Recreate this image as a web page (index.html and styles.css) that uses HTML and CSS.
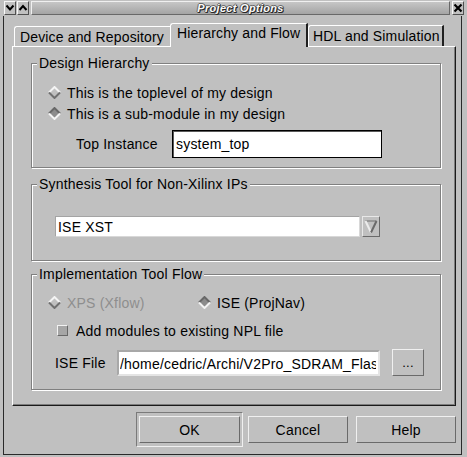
FILE: index.html
```html
<!DOCTYPE html>
<html>
<head>
<meta charset="utf-8">
<title>Project Options</title>
<link rel="stylesheet" href="styles.css">
</head>
<body>
<div class="window">
  <div class="titlebar">
    <div class="wmbtn"><svg width="10" height="8" viewBox="0 0 10 8"><polyline points="1.5,1.5 5,5.5 8.5,1.5" fill="none" stroke="#000" stroke-width="2"/></svg></div>
    <div class="wmbtn"><svg width="10" height="8" viewBox="0 0 10 8"><polyline points="1.5,6 5,2 8.5,6" fill="none" stroke="#000" stroke-width="2"/></svg></div>
    <div class="title">Project Options</div>
    <div class="wmbtn close"><svg width="10" height="10" viewBox="0 0 10 10"><path d="M1.5 1.5 L8.5 8.5 M8.5 1.5 L1.5 8.5" stroke="#000" stroke-width="2.2"/></svg></div>
  </div>
  <div class="client">
    <div class="tabs">
      <div class="tab tab-device">Device and Repository</div>
      <div class="tab tab-active">Hierarchy and Flow</div>
      <div class="tab tab-hdl">HDL and Simulation</div>
    </div>
    <div class="panel">
      <div class="group group-hier">
        <div class="group-title">Design Hierarchy</div>
        <div class="gbody">
          <div class="radio">
            <svg class="diamond" width="13" height="13" viewBox="0 0 13 13"><polyline points="1,6.5 6.5,1 12,6.5" fill="none" stroke="#f4f4f4" stroke-width="2"/><polyline points="1,6.5 6.5,12 12,6.5" fill="none" stroke="#707070" stroke-width="2"/></svg>
            <span>This is the toplevel of my design</span>
          </div>
          <div class="radio">
            <svg class="diamond" width="13" height="13" viewBox="0 0 13 13"><polygon points="6.5,1 12,6.5 6.5,12 1,6.5" fill="#8c8c8c"/><polyline points="1,6.5 6.5,1 12,6.5" fill="none" stroke="#686868" stroke-width="2"/><polyline points="1,6.5 6.5,12 12,6.5" fill="none" stroke="#f4f4f4" stroke-width="2"/></svg>
            <span>This is a sub-module in my design</span>
          </div>
          <div class="field-row top-row">
            <span class="label top-label">Top Instance</span>
            <div class="text focus top-field">system_top</div>
          </div>
        </div>
      </div>

      <div class="group group-synth">
        <div class="group-title">Synthesis Tool for Non-Xilinx IPs</div>
        <div class="gbody">
          <div class="combo">
            <div class="text combo-field">ISE XST</div>
            <div class="arrow-btn"><svg width="14" height="15" viewBox="0 0 14 15"><line x1="1.5" y1="2" x2="12.5" y2="2" stroke="#8a8a8a" stroke-width="1.5"/><line x1="1.5" y1="2" x2="7" y2="13.5" stroke="#ececec" stroke-width="2"/><line x1="12.5" y1="2" x2="7" y2="13.5" stroke="#6a6a6a" stroke-width="2"/></svg></div>
          </div>
        </div>
      </div>

      <div class="group group-impl">
        <div class="group-title">Implementation Tool Flow</div>
        <div class="gbody">
          <div class="radio-line">
            <div class="radio radio-xps disabled">
              <svg class="diamond" width="13" height="13" viewBox="0 0 13 13"><polyline points="1,6.5 6.5,1 12,6.5" fill="none" stroke="#f4f4f4" stroke-width="2"/><polyline points="1,6.5 6.5,12 12,6.5" fill="none" stroke="#707070" stroke-width="2"/></svg>
              <span>XPS (Xflow)</span>
            </div>
            <div class="radio">
              <svg class="diamond" width="13" height="13" viewBox="0 0 13 13"><polygon points="6.5,1 12,6.5 6.5,12 1,6.5" fill="#8c8c8c"/><polyline points="1,6.5 6.5,1 12,6.5" fill="none" stroke="#686868" stroke-width="2"/><polyline points="1,6.5 6.5,12 12,6.5" fill="none" stroke="#f4f4f4" stroke-width="2"/></svg>
              <span>ISE (ProjNav)</span>
            </div>
          </div>
          <div class="check-row">
            <span class="checkbox"></span>
            <span>Add modules to existing NPL file</span>
          </div>
          <div class="field-row file-row">
            <span class="label file-label">ISE File</span>
            <div class="text file-field"><span class="clip">/home/cedric/Archi/V2Pro_SDRAM_Flash</span></div>
            <button class="btn browse">...</button>
          </div>
        </div>
      </div>
    </div>
    <div class="buttons">
      <div class="default-ring"><button class="btn btn-ok">OK</button></div>
      <button class="btn btn-wide">Cancel</button>
      <button class="btn btn-wide">Help</button>
    </div>
  </div>
</div>
</body>
</html>
```

FILE: styles.css
```css
* { box-sizing: border-box; }

body {
  margin: 0;
  background: #c0c0c0;
  font-family: "Liberation Sans", Arial, sans-serif;
  font-size: 14px;
  letter-spacing: 0.2px;
  color: #000;
}

.window {
  width: 467px;
  height: 457px;
  background: #c0c0c0;
  display: flex;
  flex-direction: column;
  overflow: hidden;
}

/* ---------- title bar ---------- */
.titlebar {
  height: 16px;
  flex: 0 0 16px;
  display: flex;
  padding: 1px 3px 1px 4px;
}

.wmbtn {
  width: 12px;
  height: 14px;
  border: 1px solid;
  border-color: #f8f8f8 #505050 #505050 #f8f8f8;
  background: #c0c0c0;
  display: flex;
  align-items: center;
  justify-content: center;
}

.wmbtn + .wmbtn { margin-left: 1px; }

.title {
  flex: 1;
  margin: 0 2px;
  height: 14px;
  border: 1px solid;
  border-color: #f0f0f0 #686868 #686868 #f0f0f0;
  background: linear-gradient(#c6c6c6, #a4a4a4);
  display: flex;
  align-items: center;
  justify-content: center;
  font: italic bold 11px "Liberation Sans", Arial, sans-serif;
  letter-spacing: 0.3px;
  color: #fafafa;
  text-shadow: 1px 1px 0 #262626, 1px 0 0 #3c3c3c, 0 1px 0 #3c3c3c, -1px 0 0 #6a6a6a, 0 -1px 0 #6a6a6a;
}

/* ---------- client area ---------- */
.client {
  flex: 1;
  margin: 0 5px 2px 3px;
  border: 1px solid #2a2a2a;
  border-top: 0;
  padding: 7px 5px 0 8px;
  display: flex;
  flex-direction: column;
}

.tabs {
  height: 23px;
  flex: 0 0 23px;
  display: flex;
  align-items: flex-end;
  padding-left: 2px;
}

.tab {
  height: 20px;
  line-height: 16px;
  padding: 2px 0 0 5px;
  border-top: 1px solid #fff;
  border-left: 1px solid #fff;
  border-top-left-radius: 3px;
  white-space: nowrap;
  letter-spacing: 0.15px;
  background: #c0c0c0;
}

.tab-device { width: 156px; }

.tab-active {
  width: 138px;
  height: 24px;
  margin-bottom: -1px;
  padding: 1px 0 0 6px;
  border-right: 2px solid #202020;
  position: relative;
  z-index: 1;
}

.tab-hdl {
  width: 136px;
  height: 21px;
  padding: 2px 0 0 4px;
  border-right: 2px solid #202020;
}

.panel {
  height: 360px;
  flex: 0 0 360px;
  border-top: 1px solid #fff;
  border-left: 1px solid #fff;
  border-right: 1px solid #1a1a1a;
  border-bottom: 1px solid #1a1a1a;
  box-shadow: inset -1px -1px 0 #7c7c7c;
  padding: 16px 0 0 18px;
}

/* ---------- etched group boxes ---------- */
.group {
  width: 410px;
  border: 1px solid #808080;
  box-shadow: inset 1px 1px 0 #fff, 1px 1px 0 #fff;
}

.group-title {
  width: fit-content;
  margin: -9px 0 0 5px;
  padding: 0 2px;
  line-height: 16px;
  background: #c0c0c0;
  white-space: nowrap;
}

.group-hier .gbody { padding: 11px 0 9px 16px; }

.group-synth { margin-top: 16px; }
.group-synth .gbody { padding: 24px 0 23px 23px; }

.group-impl { margin-top: 13px; }
.group-impl .gbody { padding: 10px 0 13px 16px; }

/* ---------- radio buttons ---------- */
.radio {
  height: 21px;
  display: flex;
  align-items: center;
  white-space: nowrap;
}

.diamond {
  flex: 0 0 13px;
  margin-right: 6px;
}

.radio-line { display: flex; }
.radio-xps { width: 150px; }

.disabled span {
  color: #8e8e8e;
}

/* ---------- checkbox ---------- */
.check-row {
  height: 21px;
  margin-top: 7px;
  display: flex;
  align-items: center;
  padding-left: 9px;
  white-space: nowrap;
}

.checkbox {
  width: 11px;
  height: 11px;
  margin-right: 8px;
  border: 1px solid;
  border-color: #f2f2f2 #686868 #686868 #f2f2f2;
  background: #a6a6a6;
}

/* ---------- text fields ---------- */
.field-row {
  display: flex;
  align-items: center;
}

.text {
  background: #fff;
  white-space: nowrap;
  overflow: hidden;
  line-height: 16px;
}

.top-row {
  margin-top: 6px;
  height: 28px;
}

.top-label {
  width: 96px;
  margin-left: 28px;
}

.top-field {
  width: 210px;
  height: 28px;
  border: 1px solid #000;
  box-shadow: inset 1px 1px 0 #5a5a5a;
  padding: 5px 3px 0 3px;
}

.combo {
  display: flex;
  height: 21px;
}

.combo-field {
  width: 305px;
  height: 21px;
  border: 1px solid;
  border-color: #a4a4a4 #d8d8d8 #d8d8d8 #a4a4a4;
  padding: 2px 2px 0 2px;
}

.arrow-btn {
  width: 18px;
  height: 21px;
  margin-left: 2px;
  border: 1px solid;
  border-color: #e8e8e8 #6a6a6a #6a6a6a #e8e8e8;
  display: flex;
  align-items: center;
  justify-content: center;
}

.file-row {
  margin-top: 8px;
  height: 27px;
}

.file-label {
  width: 62px;
  margin-left: 7px;
}

.file-field {
  width: 263px;
  height: 26px;
  border: 2px solid;
  border-color: #a8a8a8 #e4e4e4 #e4e4e4 #a8a8a8;
  padding: 4px 0 0 1px;
}

.clip {
  display: block;
  width: 256px;
  overflow: hidden;
}

/* ---------- push buttons ---------- */
.btn {
  font: 14px "Liberation Sans", Arial, sans-serif;
  letter-spacing: 0.2px;
  color: #000;
  background: #c0c0c0;
  height: 27px;
  border: 1px solid;
  border-color: #f0f0f0 #6a6a6a #6a6a6a #f0f0f0;
  padding: 0;
  margin: 0;
}

.browse {
  width: 32px;
  height: 27px;
  margin-left: 12px;
  font-size: 13px;
}

.buttons {
  height: 35px;
  flex: 0 0 35px;
  margin-top: 6px;
  display: flex;
  align-items: center;
  justify-content: flex-end;
}

.default-ring {
  width: 107px;
  height: 35px;
  border: 1px solid;
  border-color: #7a7a7a #f0f0f0 #f0f0f0 #7a7a7a;
  display: flex;
  align-items: center;
  justify-content: center;
  margin-right: 5px;
}

.btn-ok { width: 101px; }

.btn-wide { width: 100px; }
.btn-wide + .btn-wide { margin-left: 8px; }
```
